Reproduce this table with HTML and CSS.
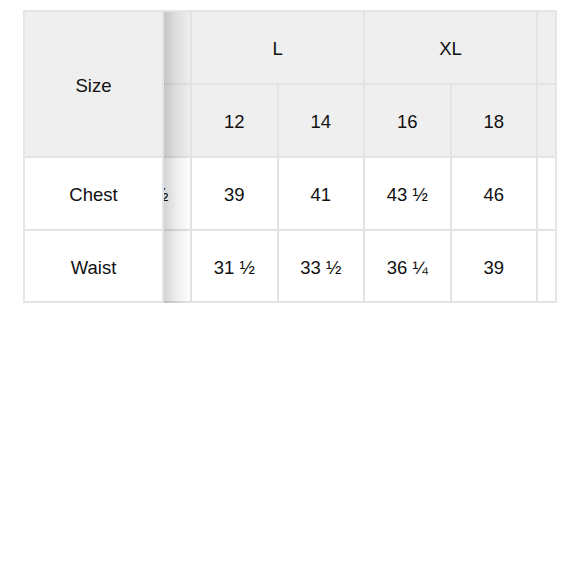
FILE: index.html
```html
<!DOCTYPE html>
<html lang="en">
<head>
<meta charset="utf-8">
<title>Size chart</title>
<link rel="stylesheet" href="styles.css">
</head>
<body>
<div class="scroller" id="chart">
  <table class="chart">
    <colgroup>
      <col class="col-label">
      <col class="col-size"><col class="col-size">
      <col class="col-size"><col class="col-size">
      <col class="col-size"><col class="col-size">
      <col class="col-size"><col class="col-size">
    </colgroup>
    <thead>
      <tr class="row-tall">
        <th class="sticky" rowspan="2">Size</th>
        <th colspan="2">M</th>
        <th colspan="2">L</th>
        <th colspan="2">XL</th>
        <th colspan="2">XXL</th>
      </tr>
      <tr class="row-tall">
        <th>8</th><th>10</th>
        <th>12</th><th>14</th>
        <th>16</th><th>18</th>
        <th>20</th><th>22</th>
      </tr>
    </thead>
    <tbody>
      <tr class="row-tall">
        <th class="sticky body">Chest</th>
        <td>35</td><td>37 ½</td>
        <td>39</td><td>41</td>
        <td>43 ½</td><td>46</td>
        <td>48 ½</td><td>51</td>
      </tr>
      <tr class="row-short">
        <th class="sticky body">Waist</th>
        <td>28</td><td>30</td>
        <td>31 ½</td><td>33 ½</td>
        <td>36 ¼</td><td>39</td>
        <td>41 ½</td><td>44</td>
      </tr>
    </tbody>
  </table>
</div>
<script src="script.js"></script>
</body>
</html>
```

FILE: styles.css
```css
html, body {
  margin: 0;
  padding: 0;
  background: #ffffff;
}

body {
  font-family: "Liberation Sans", Arial, sans-serif;
  color: #111111;
  padding: 10px 23px 0;
}

.scroller {
  width: 534px;
  box-sizing: border-box;
  border: 2px solid #e6e6e6;
  border-bottom: 0;
  overflow-x: auto;
  overflow-y: hidden;
  scrollbar-width: none;
}

.scroller::-webkit-scrollbar {
  display: none;
}

.chart {
  border-collapse: separate;
  border-spacing: 0;
  table-layout: fixed;
  width: 831px;
}

.col-label {
  width: 139px;
}

.col-size {
  width: 86.5px;
}

.chart th,
.chart td {
  box-sizing: border-box;
  padding: 3px 0 0;
  border-right: 2px solid #e3e3e3;
  border-bottom: 2px solid #e3e3e3;
  text-align: center;
  vertical-align: middle;
  font-size: 18.5px;
  font-weight: normal;
  white-space: nowrap;
}

.row-short > th,
.row-short > td {
  height: 72px;
}

.row-tall > th,
.row-tall > td {
  height: 73px;
}

.chart thead th {
  background: #efefef;
}

.chart tbody td,
.chart tbody th {
  background: #ffffff;
}

.sticky {
  position: sticky;
  left: 0;
  z-index: 2;
}

.sticky::after {
  content: "";
  position: absolute;
  top: 0;
  bottom: -2px;
  right: -29px;
  width: 27px;
  background: linear-gradient(to right, rgba(0, 0, 0, 0.17), rgba(0, 0, 0, 0.07) 45%, rgba(0, 0, 0, 0));
  pointer-events: none;
}
```

FILE: script.js
```js
document.getElementById('chart').scrollLeft = 145;
```
